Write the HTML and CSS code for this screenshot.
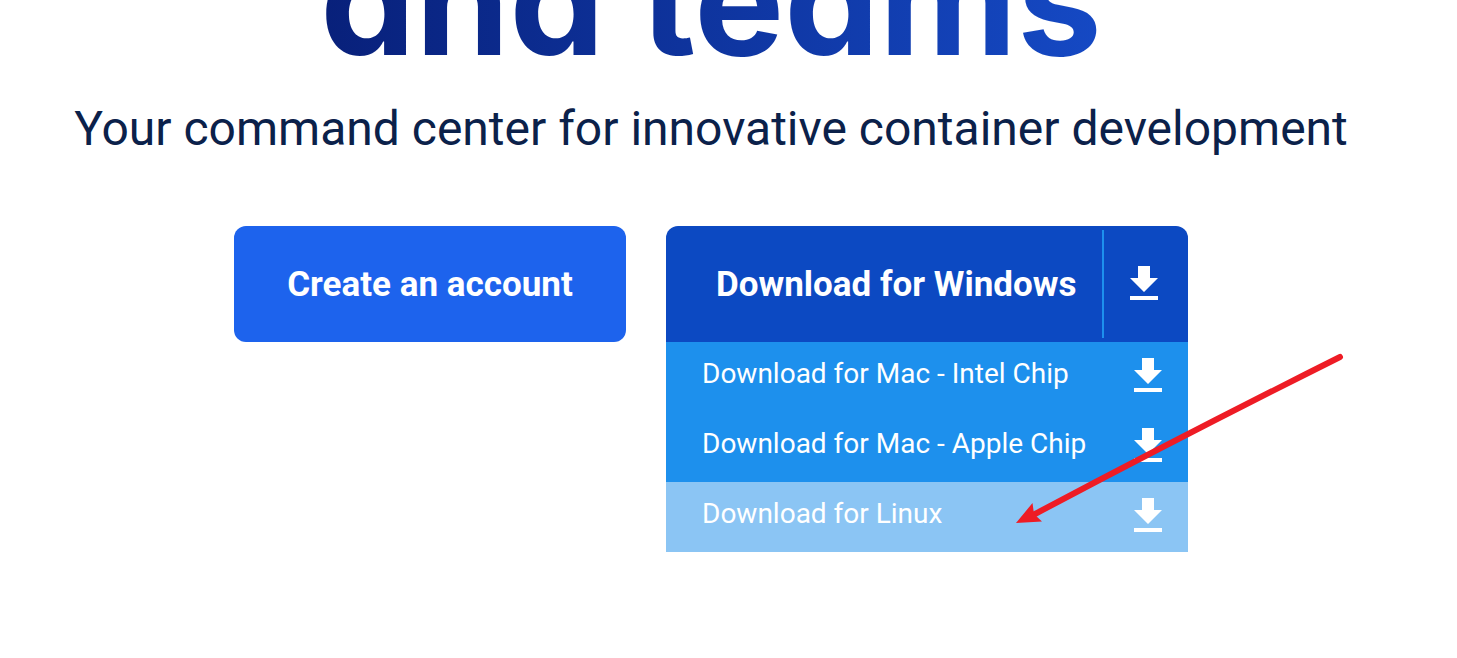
FILE: index.html
```html
<!DOCTYPE html>
<html lang="en">
<head>
    <meta charset="UTF-8">
    <meta name="viewport" content="width=device-width, initial-scale=1.0">
    <title>Docker Hub</title>
    <link rel="stylesheet" href="styles.css">
</head>
<body>
    <!-- Shared download icon -->
    <svg class="sprite" aria-hidden="true">
        <symbol id="download-icon" viewBox="0 0 28 34">
            <path d="M8 0h12v12h8L14 26 0 12h8z"/>
            <path d="M0 30h28v4H0z"/>
        </symbol>
    </svg>

    <main class="hero">
        <h1><span>and teams</span></h1>
        <p class="subtitle">Your command center for innovative container development</p>

        <div class="actions">
            <a href="#" class="btn signup">Create an account</a>

            <div class="download">
                <a href="#" class="btn download-main">
                    <span class="label">Download for Windows</span>
                    <span class="download-toggle"><svg class="icon"><use href="#download-icon"/></svg></span>
                </a>
                <ul class="download-menu">
                    <li><a href="#">Download for Mac - Intel Chip <svg class="icon"><use href="#download-icon"/></svg></a></li>
                    <li><a href="#">Download for Mac - Apple Chip <svg class="icon"><use href="#download-icon"/></svg></a></li>
                    <li class="active"><a href="#">Download for Linux <svg class="icon"><use href="#download-icon"/></svg></a></li>
                </ul>

                <!-- Arrow pointing at the Linux download -->
                <svg class="arrow" viewBox="0 0 332 176" aria-hidden="true">
                    <path class="shaft" d="M20 162.500Q176 80 326 5"/>
                    <path class="head" d="M2 171L18.500 151L20 162L28 169.500z"/>
                </svg>
            </div>
        </div>
    </main>
</body>
</html>
```

FILE: styles.css
```css
* {
    box-sizing: border-box;
}

body {
    margin: 0;
    padding: 0 35px 0 0;
    font-family: 'Roboto', sans-serif;
    background-color: #ffffff;
    color: #0b214a; /* Dark navy text color */
    overflow: hidden;
}

a {
    color: #ffffff;
    text-decoration: none;
}

.sprite {
    display: none;
}

.hero {
    text-align: center;
}

h1 {
    margin: 0;
    font-family: 'Inter', sans-serif;
    font-feature-settings: "cv11"; /* Single storey a */
    font-size: 151px;
    font-weight: 700;
    line-height: 0;
    white-space: nowrap;
}

h1 span {
    display: inline-block;
    line-height: 200px;
    margin-top: -100px;
    background: linear-gradient(90deg, #08207a, #1549c4);
    -webkit-background-clip: text;
    background-clip: text;
    color: transparent;
}

.subtitle {
    margin: 0;
    font-size: 48px;
    line-height: 58px;
    white-space: nowrap;
}

.actions {
    display: flex;
    justify-content: center;
    align-items: flex-start;
    gap: 40px;
    margin-top: 68px;
}

.btn {
    display: flex;
    align-items: center;
    height: 116px;
    font-size: 35px;
    font-weight: 700;
    white-space: nowrap;
}

.signup {
    justify-content: center;
    width: 392px;
    border-radius: 12px;
    background-color: #1d63ed; /* Blue sign up button */
}

.download {
    position: relative;
    width: 522px;
}

.download-main {
    padding: 4px 0;
    border-radius: 12px 12px 0 0;
    background-color: #0c49c2; /* Darker blue download button */
}

.label {
    flex: 1;
    padding-left: 50px;
    text-align: left;
}

.download-toggle {
    display: flex;
    align-items: center;
    height: 100%;
    padding: 0 30px 2px 26px;
    border-left: 2px solid #1d90ed;
}

.icon {
    display: block;
    width: 28px;
    height: 34px;
    fill: #ffffff;
}

.download-menu {
    margin: 0;
    padding: 0;
    list-style: none;
    background-color: #1d90ed;
}

.download-menu a {
    display: flex;
    justify-content: space-between;
    height: 70px;
    padding: 16px 26px 0 36px;
    font-size: 28px;
    line-height: 32px;
    white-space: nowrap;
}

.download-menu .active {
    background-color: #8bc5f4; /* Light blue for the selected item */
}

.arrow {
    position: absolute;
    top: 126px;
    left: 348px;
    width: 332px;
    height: 176px;
    pointer-events: none;
}

.shaft {
    fill: none;
    stroke: #ee1c25;
    stroke-width: 6;
    stroke-linecap: round;
}

.head {
    fill: #ee1c25;
}
```
